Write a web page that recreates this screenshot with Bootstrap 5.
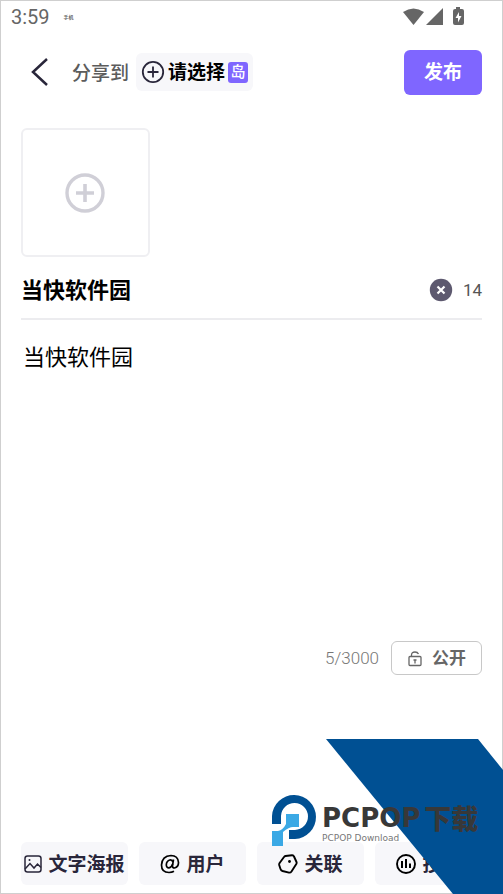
<!DOCTYPE html>
<html lang="zh-CN">
<head>
<meta charset="utf-8">
<meta name="viewport" content="width=device-width, initial-scale=1">
<title>发布</title>
<link href="https://cdn.jsdelivr.net/npm/bootstrap@5.3.0/dist/css/bootstrap.min.css" rel="stylesheet">
<style>
  body { font-family: Roboto, "Noto Sans CJK SC", sans-serif; color: #000; background: #fff; }
  svg { display: block; flex: none; }
  .screen { min-height: 100vh; border: 1px solid #cfcfcf; padding: 0 20px 8px; }
  .status { height: 32px; margin: 0 -10px; padding-right: 27px; color: #666; font-size: 20px; line-height: 34px; }
  .status-note { font-size: 5px; font-weight: 700; margin-left: 14px; }
  .topbar { margin-top: 16px; height: 46px; }
  .share-label { font-size: 19px; font-weight: 500; color: #5c5c5c; margin-left: 23px; padding-top: 4px; }
  .plain { border: 0; background: none; padding: 0; color: inherit; }
  .island { background: #f7f7fa; border-radius: 6px; height: 38px; padding: 0 5px; margin-left: 7px; font-size: 19px; font-weight: 700; gap: 3px; }
  .island-label { padding-top: 3px; }
  .island-tag { background: #7f66ff; color: #fff; font-size: 15px; font-weight: 500; line-height: 21px; width: 20px; height: 21px; border-radius: 3px; }
  .publish, .publish:hover { background: #7f66ff; color: #fff; border-radius: 6px; width: 78px; height: 45px; font-size: 19px; font-weight: 700; padding: 2px 0 0; }
  .upload { width: 129px; height: 129px; border: 2px solid #efeff2; border-radius: 6px; margin-top: 33px; padding-right: 1px; }
  .title-row { height: 63px; border-bottom: 2px solid #ececef; padding-top: 5px; }
  .title-input, .content-input { border: 0; outline: 0; background: none; padding: 0; color: #000; min-width: 0; font-size: 22px; }
  .title-input { font-weight: 700; height: 32px; }
  .content-input { resize: none; line-height: 32px; margin-top: 22px; padding-left: 2px; }
  .remaining { font-size: 17px; color: #555; margin-left: 10px; padding-top: 2px; }
  .count { font-size: 17px; font-weight: 300; color: #777; padding-top: 2px; }
  .privacy { width: 91px; height: 34px; border: 1px solid #c8c8c8; border-radius: 6px; font-size: 17px; font-weight: 700; color: #666; gap: 9px; padding-top: 1px; }
  .tools { gap: 11px; margin-top: 167px; }
  .tool { flex: 1 1 0; min-width: 0; height: 43px; border-radius: 6px; background: #f7f7fa; color: #29263a; font-size: 19px; font-weight: 700; gap: 6px; white-space: nowrap; }
  .tool span { padding-top: 3px; }
  .watermark { position: absolute; right: 0; bottom: 0; pointer-events: none; }
  .brand { position: absolute; right: 20px; bottom: 48px; width: 211px; gap: 5px; pointer-events: none; color: #383838; }
  .brand-text { padding-top: 9px; }
  .brand-name { font: 700 26px/30px "DejaVu Sans", sans-serif; white-space: nowrap; }
  .brand-cjk { font: 900 27px/30px "Noto Sans CJK SC", sans-serif; }
  .brand-sub { font: 9px/11px "DejaVu Sans", sans-serif; color: #777; white-space: nowrap; }
</style>
<script src="https://cdn.jsdelivr.net/npm/bootstrap@5.3.0/dist/js/bootstrap.bundle.min.js"></script>
</head>
<body>
<div class="screen position-relative overflow-hidden d-flex flex-column">
  <div class="status d-flex align-items-center">
    <span>3:59</span><span class="status-note">手机</span>
    <svg class="ms-auto" width="62" height="20" viewBox="0 0 62 20" fill="#666" aria-hidden="true">
      <path d="M0 5Q10.500-2 21 5L10.500 18Z"/><path d="M40 1V18H23Z"/>
      <path d="M53 0h4v2h2q2 0 2 2v12q0 2-2 2h-7q-2 0-2-2V4q0-2 2-2h1z"/>
      <path d="M56 5L52.500 11H55V15.500L58.500 9H56Z" fill="#fff"/>
    </svg>
  </div>

  <header class="topbar d-flex align-items-center">
    <button class="plain ms-2" type="button" aria-label="返回">
      <svg width="20" height="30" viewBox="0 0 20 30" fill="none" stroke="#29263a" stroke-width="2.500"><path d="M18 2L4 15L18 28"/></svg>
    </button>
    <span class="share-label">分享到</span>
    <button class="plain island d-flex align-items-center" type="button">
      <svg width="24" height="24" viewBox="0 0 24 24" fill="none" stroke="#29263a" stroke-width="1.800"><circle cx="12" cy="12" r="10.200"/><path d="M12 6.500V17.500M6.500 12H17.500"/></svg>
      <span class="island-label">请选择</span><span class="island-tag">岛</span>
    </button>
    <button class="btn publish ms-auto" type="button">发布</button>
  </header>

  <main class="d-flex flex-column flex-grow-1">
    <button class="plain upload d-flex align-items-center justify-content-center" type="button" aria-label="添加图片">
      <svg width="40" height="40" viewBox="0 0 40 40" fill="none" stroke="#d0cfd7"><circle cx="20" cy="20" r="18" stroke-width="3.400"/><path d="M20 11V29M11 20H29" stroke-width="3.600"/></svg>
    </button>
    <div class="title-row d-flex align-items-center">
      <input class="title-input flex-grow-1" type="text" value="当快软件园" aria-label="标题">
      <button class="plain" type="button" aria-label="清除标题">
        <svg width="24" height="24" viewBox="0 0 24 24"><circle cx="12" cy="12" r="11.200" fill="#5d596f"/><path d="M8.500 8.500L15.500 15.500M15.500 8.500L8.500 15.500" stroke="#fff" stroke-width="2.200"/></svg>
      </button>
      <span class="remaining">14</span>
    </div>
    <textarea class="content-input flex-grow-1" aria-label="正文">当快软件园</textarea>
    <div class="d-flex align-items-center justify-content-end gap-2">
      <span class="count me-1">5/3000</span>
      <button class="plain privacy d-flex align-items-center justify-content-center" type="button">
        <svg width="16" height="18" viewBox="0 0 16 18" fill="none" stroke="#666" stroke-width="1.300"><rect x="2" y="6.500" width="12" height="9" rx="1"/><path d="M4.500 6.500V5Q4.500 2 8 2Q10.500 2 11.500 4M8 10V13.500M6.500 10H9.500"/></svg>
        <span>公开</span>
      </button>
    </div>
  </main>

  <nav class="tools d-flex" aria-label="工具">
    <button class="plain tool d-flex align-items-center justify-content-center" type="button">
      <svg width="18" height="18" viewBox="0 0 18 18" fill="none" stroke="#29263a" stroke-width="1.500"><rect x="1" y="1" width="16" height="16" rx="2.500"/><path d="M1 14L6 8.500L10 13L13.500 9L17 12.500"/><circle cx="5.500" cy="5" r="1" fill="#29263a" stroke="none"/></svg>
      <span>文字海报</span>
    </button>
    <button class="plain tool d-flex align-items-center justify-content-center" type="button">
      <svg width="20" height="20" viewBox="0 0 20 20" fill="none" stroke="#000" stroke-width="1.700"><path d="M13.500 5.500L12.500 11.500Q12.200 14 14.500 14Q18.500 13 18.500 8.500Q18 1.500 11 1.500Q2 2 1.500 11Q1.500 18.500 9 18.500Q12 18.500 14 17.300"/><path d="M13 8Q12 5.500 9.800 6Q6.500 6.800 6.300 11Q6.500 14 9 13.800Q11.500 13.500 12.700 10"/></svg>
      <span>用户</span>
    </button>
    <button class="plain tool d-flex align-items-center justify-content-center" type="button">
      <svg width="20" height="20" viewBox="0 0 20 20" fill="none" stroke="#000" stroke-width="1.900" stroke-linejoin="round"><path d="M7.500 2L14 1.200Q15.500 1.100 16 2.500L18.500 8Q18.900 9 18.300 10L13.500 17.500Q12.500 18.900 11 18.600L4.500 17Q3 16.500 2.500 15L1.200 11Q1 10 1.600 9L6 3Q6.500 2.200 7.500 2Z"/><circle cx="11.500" cy="7.500" r="1.400" fill="#000" stroke="none"/></svg>
      <span>关联</span>
    </button>
    <button class="plain tool d-flex align-items-center justify-content-center" type="button">
      <svg width="20" height="20" viewBox="0 0 20 20" fill="none" stroke="#000" stroke-width="1.900"><circle cx="10" cy="10" r="9"/><path d="M6 7V14M10 5V14M14 9.500V14" stroke-width="2"/></svg>
      <span>投票</span>
    </button>
  </nav>
</div>

<svg class="watermark" width="177" height="155" viewBox="0 0 177 155" aria-hidden="true"><path d="M0 0H152L177 31V155H127Z" fill="#005093"/></svg>
<div class="brand d-flex align-items-start">
  <svg width="45" height="52" viewBox="0 0 45 52" aria-hidden="true">
    <path d="M0 30V22A22 22 0 1 1 23 45H17V36H23A13.500 13.500 0 1 0 9 22V30Z" fill="#005093"/>
    <path d="M14 20H27V33H21Q17 33 11 38V52H0V37H6Q11 36 14 30Z" fill="#3ba9e5"/>
  </svg>
  <div class="brand-text">
    <div class="d-flex align-items-center gap-1"><span class="brand-name">PCPOP</span><span class="brand-cjk">下载</span></div>
    <div class="brand-sub">PCPOP Download</div>
  </div>
</div>
</body>
</html>
